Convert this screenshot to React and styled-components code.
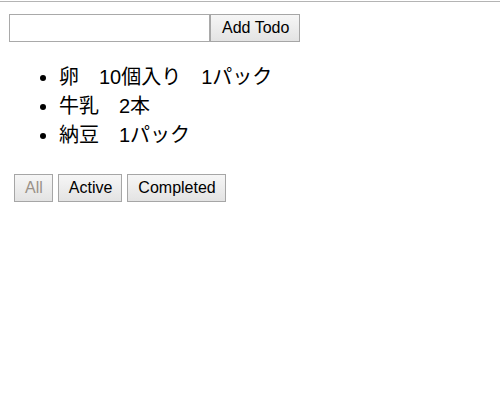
import React, { useState } from "react";
import styled, { createGlobalStyle } from "styled-components";

const GlobalStyle = createGlobalStyle`
  body {
    margin: 0;
    background: #fff;
    font-family: "Liberation Sans", Arial, sans-serif;
  }
`

const Page = styled.div`
  margin-top: 1px;
  border-top: 1px solid #b4b4b4;
  padding: 12px 9px 0;
`

const Form = styled.form`
  display: flex;
  align-items: stretch;
  height: 28px;
`

const TextInput = styled.input`
  box-sizing: border-box;
  width: 201px;
  height: 28px;
  margin: 0;
  border: 1px solid #a9a9a9;
  padding: 2px 4px;
  font-size: 16px;
  font-family: "Liberation Sans", Arial, sans-serif;
  outline: none;
`

const Button = styled.button`
  box-sizing: border-box;
  height: 28px;
  margin: 0;
  padding: ${(p) => (p.$compact ? "0 9px 0 10px" : "0 10px 0 11px")};
  border: 1px solid #a6a6a6;
  border-radius: 0;
  background: linear-gradient(#f6f6f6, #e3e3e3);
  color: ${(p) => (p.disabled ? "#9a9288" : "#000")};
  font-size: 16px;
  font-family: "Liberation Sans", Arial, sans-serif;
  cursor: pointer;
`

const List = styled.ul`
  margin: 21px 0 20px;
  padding-left: 50px;
  font-size: 20px;
  font-family: "Liberation Sans", "Noto Sans CJK JP", sans-serif;
  line-height: 29px;
`

const Filters = styled.div`
  display: flex;
  gap: 5px;
  padding: 4px 5px;
`

const initialTodos = [
  { id: 1, text: "卵　10個入り　1パック", done: false },
  { id: 2, text: "牛乳　2本", done: false },
  { id: 3, text: "納豆　1パック", done: false },
];

const filters = ["All", "Active", "Completed"];

const App = () => {
  const [todos, setTodos] = useState(initialTodos);
  const [value, setValue] = useState("");
  const [filter, setFilter] = useState("All");

  const visible = todos.filter((t) =>
    filter === "All" ? true : filter === "Active" ? !t.done : t.done
  );

  const onSubmit = (e) => {
    e.preventDefault();
    if (!value.trim()) return;
    setTodos([...todos, { id: Date.now(), text: value, done: false }]);
    setValue("");
  };

  return (
    <Page>
      <GlobalStyle />
      <Form onSubmit={onSubmit}>
        <TextInput value={value} onChange={(e) => setValue(e.target.value)} />
        <Button type="submit">Add Todo</Button>
      </Form>
      <List>
        {visible.map((t) => (
          <li key={t.id}>{t.text}</li>
        ))}
      </List>
      <Filters>
        {filters.map((f) => (
          <Button
            key={f}
            $compact
            disabled={filter === f}
            onClick={() => setFilter(f)}
          >
            {f}
          </Button>
        ))}
      </Filters>
    </Page>
  );
};

export default App;
